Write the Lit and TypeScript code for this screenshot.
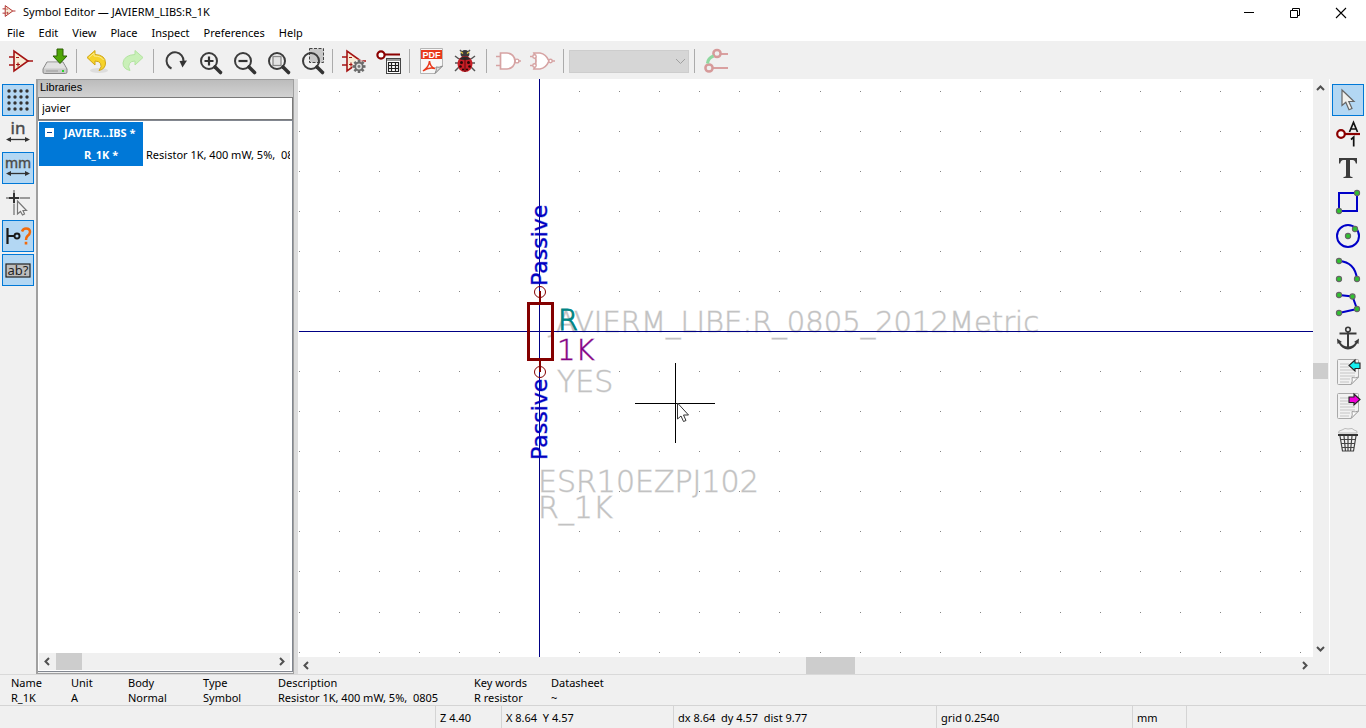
import { LitElement, html, css, svg, nothing } from "lit";
import { customElement, property } from "lit/decorators.js";

const OPAMP = svg`<path d="M6 3V23L20 13Z" fill="#f7ecd6" stroke="#a51414" stroke-width="1.6"/>
  <path d="M1 9H6M1 17H6M20 13H25" stroke="#a51414" stroke-width="1.6"/>
  <path d="M8 9.5H11M8 16.5H12M10 14.5V18.5" stroke="#a51414" stroke-width="1.2"/>`;

const LENS = svg`<circle cx="13" cy="13" r="8" fill="none" stroke="#3c3c3c" stroke-width="2"/>
  <path d="M19 19L24.5 24.5" stroke="#333" stroke-width="3.6" stroke-linecap="round"/>`;

const PAGE = svg`<path d="M2.5 1.5Q2.5 .5 3.5 .5H22.5Q23.5 .5 23.5 1.5V18L16 25.5H3.5Q2.5 25.5 2.5 24.5Z" fill="#f2f2f2" stroke="#a9a9a9"/>
  <path d="M5 5H14M5 8H14M5 11H20M5 14H20M5 17H20M5 20H15M5 23H14" stroke="#c4c4c4"/>
  <path d="M16 25.5Q18 22 17 18.5Q20 19.5 23.5 18Z" fill="#fff" stroke="#a0a0a0"/>`;

const node = (x: number, y: number) =>
  svg`<circle cx=${x} cy=${y} r="2.6" fill="#2fc22f" stroke="#666" stroke-width="1.1"/>`;

const UNIT_ARROW = svg`<path d="M3 18.5H23" stroke="#333" stroke-width="1.3"/>
  <path d="M1 18.5L6 16V21ZM25 18.5L20 16V21Z" fill="#333"/>`;

const gearTeeth = [0, 45, 90, 135, 180, 225, 270, 315].map(
  (a) => svg`<path d="M16.7 12H19.3V16H16.7Z" fill="#6b6b6b" transform="rotate(${a} 18 18.5)"/>`
);

const gridDots: unknown[] = [];
for (let r = 0; r < 4; r++)
  for (let c = 0; c < 4; c++)
    gridDots.push(svg`<circle cx=${4 + c * 6} cy=${4 + r * 6} r="1.7" fill="#333"/>`);

const ICONS: Record<string, unknown> = {
  symbol: OPAMP,
  save: svg`<path d="M5 14H21L25 21V24Q25 25.5 23.500 25.500H2.500Q1 25.500 1 24V21Z" fill="#c9c9c9" stroke="#888"/>
    <path d="M5.500 14.500H20.500L24 20.500H2Z" fill="#e2e2e2"/>
    <path d="M4 23H16M20 23H22" stroke="#999"/><path d="M20 22H22V24H20Z" fill="#2bd62b"/>
    <path d="M15 1H21V8H25L18 15.500L11 8H15Z" fill="#4ea606" stroke="#2c5f05"/>`,
  undo: svg`<ellipse cx="14" cy="22.500" rx="9" ry="2.500" fill="#ddd"/>
    <path d="M2 9.500L10 2.500V6.500Q20.500 7 20.500 15Q20.500 21 14 22.500Q17.500 18.500 15.500 15.500Q14 13 10 13V17Z" fill="#f6d32a" stroke="#d0a515"/>
    <path d="M4 9.500L9 5.200V8Q16 8 18.500 12" fill="none" stroke="#fbeb8f"/>`,
  redo: svg`<path d="M24 9.500L16 2.500V6.500Q5 7 4 15Q4 21 11 22.500Q8.500 18.500 10.500 15.500Q12 13 16 13V17Z" fill="#c9f0b8" stroke="#b2e3a0"/>`,
  rotate: svg`<path d="M9.500 20.500A8.500 8.500 0 1 1 21.500 13" fill="none" stroke="#3c3c3c" stroke-width="2"/>
    <path d="M17.500 13L25 12.500L20.500 19.500Z" fill="#333"/>`,
  zoomIn: svg`${LENS}<path d="M8.500 13H17.500M13 8.500V17.500" stroke="#333" stroke-width="2.200"/>`,
  zoomOut: svg`${LENS}<path d="M8.500 13H17.500" stroke="#333" stroke-width="2.200"/>`,
  zoomFit: svg`${LENS}<rect x="9" y="8.500" width="8" height="9" fill="#e4e4e4" stroke="#8a8a8a" stroke-width="1.300"/>`,
  zoomArea: svg`<rect x="11.500" y=".5" width="14" height="14" fill="#c8c8c8" stroke="#444" stroke-dasharray="3 1.500"/>${LENS}`,
  symbolProps: svg`${OPAMP}<circle cx="18" cy="18.500" r="7" fill="#efefef" opacity=".7"/>${gearTeeth}
    <circle cx="18" cy="18.500" r="3.800" fill="#ddd" stroke="#6b6b6b" stroke-width="1.800"/><circle cx="18" cy="18.500" r="1.400" fill="#777"/>`,
  pinTable: svg`<path d="M10 6.500H25" stroke="#8b0000" stroke-width="2"/><circle cx="6" cy="7" r="3.600" fill="#fff" stroke="#8b0000" stroke-width="2.200"/>
    <rect x="11.500" y="10.500" width="14" height="15" fill="#fff" stroke="#444"/><path d="M12 11H25V13H12Z" fill="#999"/>
    <path d="M13.500 14.500H23.500V23.500H13.500ZM13.500 17.500H23.500M13.500 20.500H23.500M16.500 14.500V23.500M20.500 14.500V23.500" fill="none" stroke="#222" stroke-width="1.200"/>`,
  pdf: svg`<path d="M2.500 .5H24.500V18L17 25.500H2.500Z" fill="#f7f7f7" stroke="#b5b5b5"/><path d="M3 2H24V11H3Z" fill="#e8391c"/>
    <text x="13.500" y="10" text-anchor="middle" font-size="9" font-weight="700" font-family="Liberation Sans, sans-serif" fill="#fff">PDF</text>
    <path d="M5 23Q11 19 11.500 13Q12 19 17 20.500Q11 18.500 5 23Z" fill="none" stroke="#e8391c" stroke-width="1.500"/>
    <path d="M17 25.500Q19 22 18 19Q21 20 24.500 18Z" fill="#ddd" stroke="#888"/>`,
  bug: svg`<path d="M7 11L3 8M19 11L23 8M6 15H3M20 15H23M7 19L3 23M19 19L23 23M10 4L8 2M16 4L18 2" stroke="#555" stroke-width="1.500"/>
    <ellipse cx="13" cy="6" rx="4.500" ry="4" fill="#3a3a3a"/><path d="M9 4L11 5.500M17 4L15 5.500" stroke="#e3c84a" stroke-width="1.500"/>
    <ellipse cx="13" cy="16" rx="7.500" ry="8" fill="#c81e26"/><path d="M7 11Q13 6 19 11Q13 13 7 11Z" fill="#2b2b2b"/><path d="M13 10V24" stroke="#5a0b0f"/>
    <g fill="#2a0808"><circle cx="9.500" cy="14.500" r="1.500"/><circle cx="16.500" cy="14.500" r="1.500"/><circle cx="8.500" cy="18.500" r="1.300"/><circle cx="17.500" cy="18.500" r="1.300"/><circle cx="11" cy="21.500" r="1.100"/><circle cx="15" cy="21.500" r="1.100"/></g>`,
  gateAnd: svg`<path d="M5.500 5H12A8 8 0 0 1 12 21H5.500Z" fill="#fff" stroke="#d6a3a3" stroke-width="1.700"/>
    <path d="M1 8.500H5M1 17.500H5M24 13H26" stroke="#d6a3a3" stroke-width="1.600"/><circle cx="22" cy="13" r="1.900" fill="#fff" stroke="#d6a3a3" stroke-width="1.400"/>`,
  gateOr: svg`<path d="M5 5H11Q17 6 20 13Q17 20 11 21H5Q9 13 5 5Z" fill="#fff" stroke="#d6a3a3" stroke-width="1.700"/>
    <path d="M1 8.500H4M1 17.500H4M23 13H26" stroke="#d6a3a3" stroke-width="1.600"/><g fill="#fff" stroke="#d6a3a3" stroke-width="1.400"><circle cx="5.500" cy="8.500" r="1.700"/><circle cx="5.500" cy="17.500" r="1.700"/><circle cx="21.500" cy="13" r="1.700"/></g>`,
  syncPins: svg`<path d="M18 6H25M10 20H25" stroke="#d9a0a0" stroke-width="1.800"/>
    <g fill="#efefef" stroke="#d69a9a" stroke-width="2.500"><circle cx="14" cy="5.500" r="3.600"/><circle cx="6" cy="20" r="3.600"/></g>
    <path d="M4.500 15.500Q5 10 10.500 8" fill="none" stroke="#8fd8a0" stroke-width="3.200"/>`,
  grid: gridDots,
  inch: svg`<text x="13" y="13" text-anchor="middle" font-size="17" font-family="Noto Sans, sans-serif" fill="#4a4a4a" stroke="#4a4a4a" stroke-width=".4">in</text>${UNIT_ARROW}`,
  mm: svg`<text x="13" y="13" text-anchor="middle" font-size="14" font-family="Noto Sans, sans-serif" fill="#4a4a4a" stroke="#4a4a4a" stroke-width=".4">mm</text>${UNIT_ARROW}`,
  cursorShape: svg`<path d="M1 9H25M9 1V26" stroke="#9a9a9a" stroke-width="1.800" stroke-dasharray="12 1.500 20"/><path d="M4 9H14M9 4V14" stroke="#333" stroke-width="2"/>
    <path d="M12.500 12V25L15.500 22.500L17.500 26L19.500 25L18 21.500H21.500Z" fill="#f4f4f4" stroke="#777" stroke-width="1.200"/>`,
  pinType: svg`<path d="M2.500 5V21M2.500 13H9" stroke="#1a1a1a" stroke-width="2.200"/><circle cx="12" cy="13" r="2.500" fill="none" stroke="#1a1a1a" stroke-width="1.900"/>
    <path d="M17 8.500Q18 5.500 21 5.500Q25 5.500 25 9Q25 11 22.500 13Q21 14.300 21 17" fill="none" stroke="#f26a0a" stroke-width="2.500"/><path d="M19.700 18.800H22.300V21.500H19.700Z" fill="#f26a0a"/>`,
  hiddenText: svg`<rect x="1" y="7" width="24" height="13" fill="#bdbdbd" stroke="#222" stroke-width="1.200"/>
    <text x="13" y="18" text-anchor="middle" font-size="13" font-family="Noto Sans, sans-serif" fill="#222">ab?</text>`,
  select: svg`<path d="M7 3V18.500L10.800 15.200L14 22.800L17 21.500L13.800 14.500H19Z" fill="#f1f1ee" stroke="#666" stroke-width="1.200"/>`,
  pin: svg`<path d="M10 13H25" stroke="#8b0000" stroke-width="2.200"/><circle cx="6" cy="13" r="3.800" fill="#fff" stroke="#8b0000" stroke-width="2.200"/>
    <path d="M14.500 11L18.500 1.500L22.500 11M16 8H21M16 18.500L18.700 16.200V25.500" fill="none" stroke="#111" stroke-width="1.700"/>`,
  text: svg`<path d="M4 3H22V8.500H20.800Q20.300 4.900 17.500 4.900H15V20.500Q15 22 17.500 22V23H8.500V22Q11 22 11 20.500V4.900H8.500Q5.700 4.900 5.200 8.500H4Z" fill="#3c3c3c"/>`,
  rect: svg`<path d="M4 4H22V22H4Z" fill="none" stroke="#0000c8" stroke-width="2"/>${node(4, 22)}${node(22, 4)}`,
  circle: svg`<circle cx="13" cy="13" r="11" fill="none" stroke="#0000c8" stroke-width="2"/>${node(13, 13)}${node(20, 6)}`,
  arc: svg`<path d="M4 4Q20 5 22 22" fill="none" stroke="#0000c8" stroke-width="2"/>${node(4, 4)}${node(4, 22)}${node(22, 22)}`,
  poly: svg`<path d="M4 4L17.500 5.500L22 18L4 22" fill="none" stroke="#0000c8" stroke-width="2"/>${node(4, 4)}${node(17.5, 5.5)}${node(22, 18)}${node(4, 22)}`,
  anchor: svg`<circle cx="13" cy="4.500" r="2.300" fill="none" stroke="#3a3a3a" stroke-width="1.600"/><path d="M13 7V22M4.500 8.500H21.500" stroke="#3a3a3a" stroke-width="2"/>
    <path d="M2 13.500L7 17L5.500 17.500Q8 21.500 13 21.500Q18 21.500 20.500 17.500L19 17L24 13.500L23.500 19L22.300 18.200Q19 24 13 24.500Q7 24 3.700 18.200L2.500 19Z" fill="#3a3a3a"/>`,
  importSym: svg`${PAGE}<path d="M14 6.500L20 1V4H25V9.500H20V12Z" fill="#14f0f0" stroke="#222" stroke-width="1.100"/>`,
  exportSym: svg`${PAGE}<path d="M25 6.500L19 1V4H14V9.500H19V12Z" fill="#f000d8" stroke="#222" stroke-width="1.100"/>`,
  trash: svg`<path d="M3.500 6Q3 3.500 7 3Q10 .5 13 2Q18 .5 19 3Q23 3.500 22 6Z" fill="#f3f3f3" stroke="#bbb"/><path d="M3 8H23" stroke="#333" stroke-width="2"/>
    <path d="M5 9L7.500 24H18.500L21 9M9 9L10.500 24M13 9V24M17 9L15.500 24M5.500 12.500H20.500M6 16.500H20M7 20.500H19" fill="none" stroke="#444" stroke-width="1.200"/>`,
  minimize: svg`<path d="M8 12.500H18" stroke="#000"/>`,
  restore: svg`<path d="M8.500 10.500H15.500V17.500H8.500ZM10.500 10.500V8.500H17.500V15.500H15.500" fill="none" stroke="#000"/>`,
  close: svg`<path d="M8 8L18 18M18 8L8 18" stroke="#000" stroke-width="1.100"/>`,
};

const icon = (name: string, cls = "icon") =>
  html`<svg class=${cls} viewBox="0 0 26 26" aria-hidden="true">${ICONS[name]}</svg>`;

@customElement("scroll-strip")
class ScrollStrip extends LitElement {
  @property({ type: Boolean, reflect: true }) vertical = false;
  @property({ type: Number }) start = 0;
  @property({ type: Number }) size = 10;

  static styles = css`
    :host { display: flex; background: #f0f0f0; height: 17px; }
    :host([vertical]) { flex-direction: column; width: 16px; height: auto; }
    button { flex: none; border: 0; padding: 0; background: none; width: 17px; height: 17px; display: grid; place-items: center; }
    :host([vertical]) button { width: 15px; height: 18px; }
    .chev { width: 9px; height: 9px; }
    .track { flex: 1; display: flex; min-width: 0; min-height: 0; }
    :host([vertical]) .track { flex-direction: column; width: 15px; }
    .thumb { background: #cdcdcd; }
  `;

  render() {
    const [a, b] = this.vertical ? ["M1 6L4.500 2.500L8 6", "M1 3L4.500 6.500L8 3"] : ["M6 1L2.500 4.500L6 8", "M3 1L6.500 4.500L3 8"];
    const chev = (d: string) => html`<svg class="chev" viewBox="0 0 9 9"><path d=${d} fill="none" stroke="#505050" stroke-width="2"/></svg>`;
    return html`
      <button aria-label="Scroll back">${chev(a)}</button>
      <div class="track">
        <div style="flex: 0 0 ${this.start}%"></div>
        <div class="thumb" style="flex: 0 0 ${this.size}%"></div>
      </div>
      <button aria-label="Scroll forward">${chev(b)}</button>`;
  }
}

@customElement("symbol-canvas")
class SymbolCanvas extends LitElement {
  static styles = css`
    :host { display: block; min-width: 0; min-height: 0; overflow: hidden; background: #fff; }
    svg { display: block; width: 100%; height: 100%; }
    .crisp { shape-rendering: crispEdges; }
    .dot { fill: #848484; }
    .axis { stroke: #000084; }
    .field { font: 200 30px "DejaVu Sans", sans-serif; stroke-width: 1px; }
    .footprint { font-size: 29px; }
    .hidden { fill: #c2c2c2; stroke: #c2c2c2; stroke-opacity: 0.5; }
    .ref { fill: #008484; stroke: #008484; }
    .val { fill: #840084; stroke: #840084; stroke-opacity: 0.5; }
    .etype { font: 400 22px "DejaVu Sans", sans-serif; fill: #0000c2; stroke: #0000c2; stroke-opacity: 0.4; }
    .body { fill: none; stroke: #840000; }
    .cross { stroke: #000; }
  `;

  private dots() {
    const out: unknown[] = [];
    for (let r = 0; r < 26; r++)
      for (let c = 0; c < 50; c++)
        out.push(svg`<rect class="dot" x=${Math.round(1 + c * 40.04)} y=${Math.floor(12 + r * 40.08)} width="1" height="1"/>`);
    return out;
  }

  render() {
    return html`<svg role="img" aria-label="Symbol R_1K">
      <g class="crisp">${this.dots()}</g>
      <g transform="translate(242 253)">
        <text class="field footprint hidden" x="8" y="0">JAVIERM_LIBE:R_0805_2012Metric</text>
        <text class="field hidden" x="17" y="60">YES</text>
        <text class="field hidden" x="-2" y="160">ESR10EZPJ102</text>
        <text class="field hidden" x="-2" y="186">R_1K</text>
        <text class="field footprint ref" x="18" y="-2">R</text>
        <text class="field footprint val" x="17" y="28">1K</text>
      </g>
      <g class="crisp axis">
        <path d="M241.500 0V2000"/><path d="M1 252.500H4000"/>
      </g>
      <g transform="translate(242 253)">
        <g class="body">
          <rect x="-11.500" y="-28.500" width="24" height="56" stroke-width="3"/>
          <path d="M0 -41V-30M0 29V40" stroke-width="2"/>
          <circle cx="0" cy="-40" r="5.500"/><circle cx="0" cy="40" r="5.500"/>
        </g>
        <text class="etype" transform="translate(7 -46) rotate(-90)">Passive</text>
        <text class="etype" transform="translate(7 128) rotate(-90)">Passive</text>
        <g class="crisp cross"><path d="M95 71.500H175M135.500 31V111"/></g>
        <path d="M137.500 71V87L141 84L143.500 89.500L146 88.500L143.500 83H148.500Z" fill="#fff" stroke="#333"/>
      </g>
    </svg>`;
  }
}

type Tool = { icon: string; label: string; off?: boolean; on?: boolean };
const t = (i: string, label: string, x: Partial<Tool> = {}): Tool => ({ icon: i, label, ...x });

@customElement("app-root")
class AppRoot extends LitElement {
  static styles = css`
    :host { display: flex; flex-direction: column; height: 100vh; overflow: hidden; background: #f0f0f0; color: #000; font: 11px/15px "Noto Sans", sans-serif; }
    * { box-sizing: border-box; }
    button { border: 0; padding: 0; background: none; font: inherit; color: inherit; }
    .icon { display: block; width: 26px; height: 26px; flex: none; overflow: visible; }
    .title { display: flex; align-items: center; height: 22px; background: #fff; padding: 0 2px; flex: none; }
    .title-icon { width: 14px; height: 14px; margin-right: 7px; }
    .title h1 { font: inherit; margin: 0; flex: 1; }
    .win { width: 46px; height: 22px; display: grid; place-items: center; }
    .menu { display: flex; height: 19px; padding-top: 2px; background: #fff; flex: none; }
    .menu button { padding: 0 7px; height: 17px; }
    .tools { display: flex; align-items: center; height: 38px; padding: 3px 4px 1px; flex: none; }
    .tool { width: 34px; height: 34px; display: grid; place-items: center; flex: none; }
    .sep { width: 1px; height: 24px; margin: 0 4px; background: #ababab; flex: none; }
    .combo { position: relative; margin: 0 1px; }
    .combo select { appearance: none; display: block; width: 120px; height: 23px; border: 1px solid #bfbfbf; border-radius: 0; background: #ccc; }
    .combo svg { position: absolute; right: 4px; top: 7px; width: 9px; height: 9px; pointer-events: none; }
    .main { flex: 1; display: flex; min-height: 0; }
    .side { width: 36px; padding: 5px 2px; display: flex; flex-direction: column; gap: 2px; flex: none; }
    .side button { width: 32px; height: 32px; display: grid; place-items: center; border: 1px solid transparent; flex: none; }
    .side .on { background: #b3d7f3; border-color: #0078d7; }
    .libs { width: 258px; flex: none; display: flex; flex-direction: column; border: 1px solid #a0a0a0; border-left-width: 2px; min-height: 0; padding-bottom: 1px; }
    .libs h2 { margin: 0; height: 17px; padding: 0 2px; font: 11px/15px "Liberation Sans", sans-serif; background: linear-gradient(#bcbcbc, #d2d2d2); flex: none; }
    .libs input { height: 23px; border: 1px solid #7a7a7a; border-radius: 0; padding: 0 3px 2px; font: inherit; width: 100%; background: #fff; outline: 0; flex: none; }
    .tree { flex: 1; display: flex; flex-direction: column; min-height: 0; background: #fff; border: 1px solid #828790; border-left: 0; padding: 1px 2px 1px 1px; }
    .rows { flex: 1; overflow: hidden; }
    table { border-collapse: collapse; }
    .rows table { table-layout: fixed; width: 100%; }
    .rows .c1 { width: 104px; }
    .rows td { height: 22px; padding: 0 0 2px 3px; white-space: pre; overflow: hidden; }
    .rows .name { background: #0078d7; color: #fff; font-weight: 700; padding-left: 6px; }
    .rows .leaf { padding-left: 45px; }
    .cellrow { display: flex; align-items: center; gap: 10px; }
    .box { width: 9px; height: 9px; background: #fff; display: block; }
    .gutter { width: 4px; background: #dcdcdc; flex: none; }
    .view { flex: 1; display: grid; grid-template: minmax(0, 1fr) 17px / minmax(0, 1fr) 16px; min-width: 0; border-right: 1px solid #fff; }
    .msg { flex: none; height: 32px; padding: 0 0 0 11px; border-top: 1px solid #d9d9d9; border-bottom: 1px solid #d4d4d4; overflow: hidden; }
    .msg table { table-layout: fixed; width: 640px; }
    .msg th, .msg td { padding: 0; text-align: left; font-weight: 400; line-height: 15px; white-space: pre; }
    .w60 { width: 60px; } .w57 { width: 57px; } .w75 { width: 75px; } .w196 { width: 196px; } .w77 { width: 77px; }
    .status { flex: none; height: 22px; display: grid; grid-template-columns: 435fr 66fr 172fr 263fr 196fr 54fr 180fr; white-space: pre; line-height: 23px; }
    .status span + span { border-left: 1px solid #d4d4d4; padding-left: 4px; }
  `;

  private groups: Tool[][] = [
    [t("symbol", "New symbol"), t("save", "Save")],
    [t("undo", "Undo"), t("redo", "Redo", { off: true })],
    [t("rotate", "Refresh"), t("zoomIn", "Zoom in"), t("zoomOut", "Zoom out"), t("zoomFit", "Zoom to fit"), t("zoomArea", "Zoom to selection")],
    [t("symbolProps", "Symbol properties"), t("pinTable", "Pin table")],
    [t("pdf", "Datasheet"), t("bug", "Check symbol")],
    [t("gateAnd", "Standard body", { off: true }), t("gateOr", "Alternate body", { off: true })],
  ];
  private left: Tool[] = [
    t("grid", "Grid", { on: true }), t("inch", "Inches"), t("mm", "Millimeters", { on: true }),
    t("cursorShape", "Cursor shape"), t("pinType", "Pin types", { on: true }), t("hiddenText", "Hidden fields", { on: true }),
  ];
  private right: Tool[] = [
    t("select", "Select", { on: true }), t("pin", "Add pin"), t("text", "Add text"), t("rect", "Add rectangle"), t("circle", "Add circle"),
    t("arc", "Add arc"), t("poly", "Add lines"), t("anchor", "Move anchor"), t("importSym", "Import"), t("exportSym", "Export"), t("trash", "Delete"),
  ];
  private info = [
    ["Name", "R_1K"], ["Unit", "A"], ["Body", "Normal"], ["Type", "Symbol"],
    ["Description", "Resistor 1K, 400 mW, 5%,  0805"], ["Key words", "R resistor"], ["Datasheet", "~"],
  ];

  private side(items: Tool[], label: string) {
    return html`<nav class="side" aria-label=${label}>${items.map(
      (i) => html`<button class=${i.on ? "on" : ""} aria-label=${i.label}>${icon(i.icon)}</button>`
    )}</nav>`;
  }

  render() {
    return html`
      <header class="title">
        ${icon("symbol", "title-icon")}
        <h1>Symbol Editor — JAVIERM_LIBS:R_1K</h1>
        ${["minimize", "restore", "close"].map((n) => html`<button class="win" aria-label=${n}>${icon(n)}</button>`)}
      </header>
      <nav class="menu">${["File", "Edit", "View", "Place", "Inspect", "Preferences", "Help"].map((m) => html`<button>${m}</button>`)}</nav>
      <div class="tools" role="toolbar">
        ${this.groups.map((g) => html`${g.map((i) => html`<button class="tool" aria-label=${i.label} ?disabled=${!!i.off}>${icon(i.icon)}</button>`)}<div class="sep"></div>`)}
        <div class="combo">
          <select aria-label="Unit" disabled></select>
          <svg viewBox="0 0 9 9"><path d="M0 2L4.500 6.500L9 2" fill="none" stroke="#a0a0a0"/></svg>
        </div>
        <div class="sep"></div>
        <button class="tool" aria-label="Synchronized pins" disabled>${icon("syncPins")}</button>
      </div>
      <div class="main">
        ${this.side(this.left, "Display options")}
        <section class="libs">
          <h2>Libraries</h2>
          <input type="text" aria-label="Filter libraries" value="javier" />
          <div class="tree">
            <div class="rows">
              <table>
                <colgroup><col class="c1" /><col /></colgroup>
                <tbody>
                  <tr><td class="name"><div class="cellrow"><svg class="box" viewBox="0 0 9 9"><path d="M2 4.500H7" stroke="#0a3f8a"/></svg>JAVIER...IBS *</div></td><td></td></tr>
                  <tr><td class="name leaf">R_1K *</td><td>Resistor 1K, 400 mW, 5%,  0805</td></tr>
                </tbody>
              </table>
            </div>
            <scroll-strip .start=${0} .size=${12}></scroll-strip>
          </div>
        </section>
        <div class="gutter"></div>
        <section class="view">
          <symbol-canvas></symbol-canvas>
          <scroll-strip vertical .start=${49} .size=${3}></scroll-strip>
          <scroll-strip .start=${50} .size=${5}></scroll-strip>
        </section>
        ${this.side(this.right, "Drawing tools")}
      </div>
      <div class="msg">
        <table>
          <colgroup>${["w60", "w57", "w75", "w75", "w196", "w77", ""].map((c) => html`<col class=${c || nothing} />`)}</colgroup>
          <thead><tr>${this.info.map((i) => html`<th scope="col">${i[0]}</th>`)}</tr></thead>
          <tbody><tr>${this.info.map((i) => html`<td>${i[1]}</td>`)}</tr></tbody>
        </table>
      </div>
      <footer class="status">
        <span></span><span>Z 4.40</span><span>X 8.64  Y 4.57</span><span>dx 8.64  dy 4.57  dist 9.77</span><span>grid 0.2540</span><span>mm</span><span></span>
      </footer>`;
  }
}
